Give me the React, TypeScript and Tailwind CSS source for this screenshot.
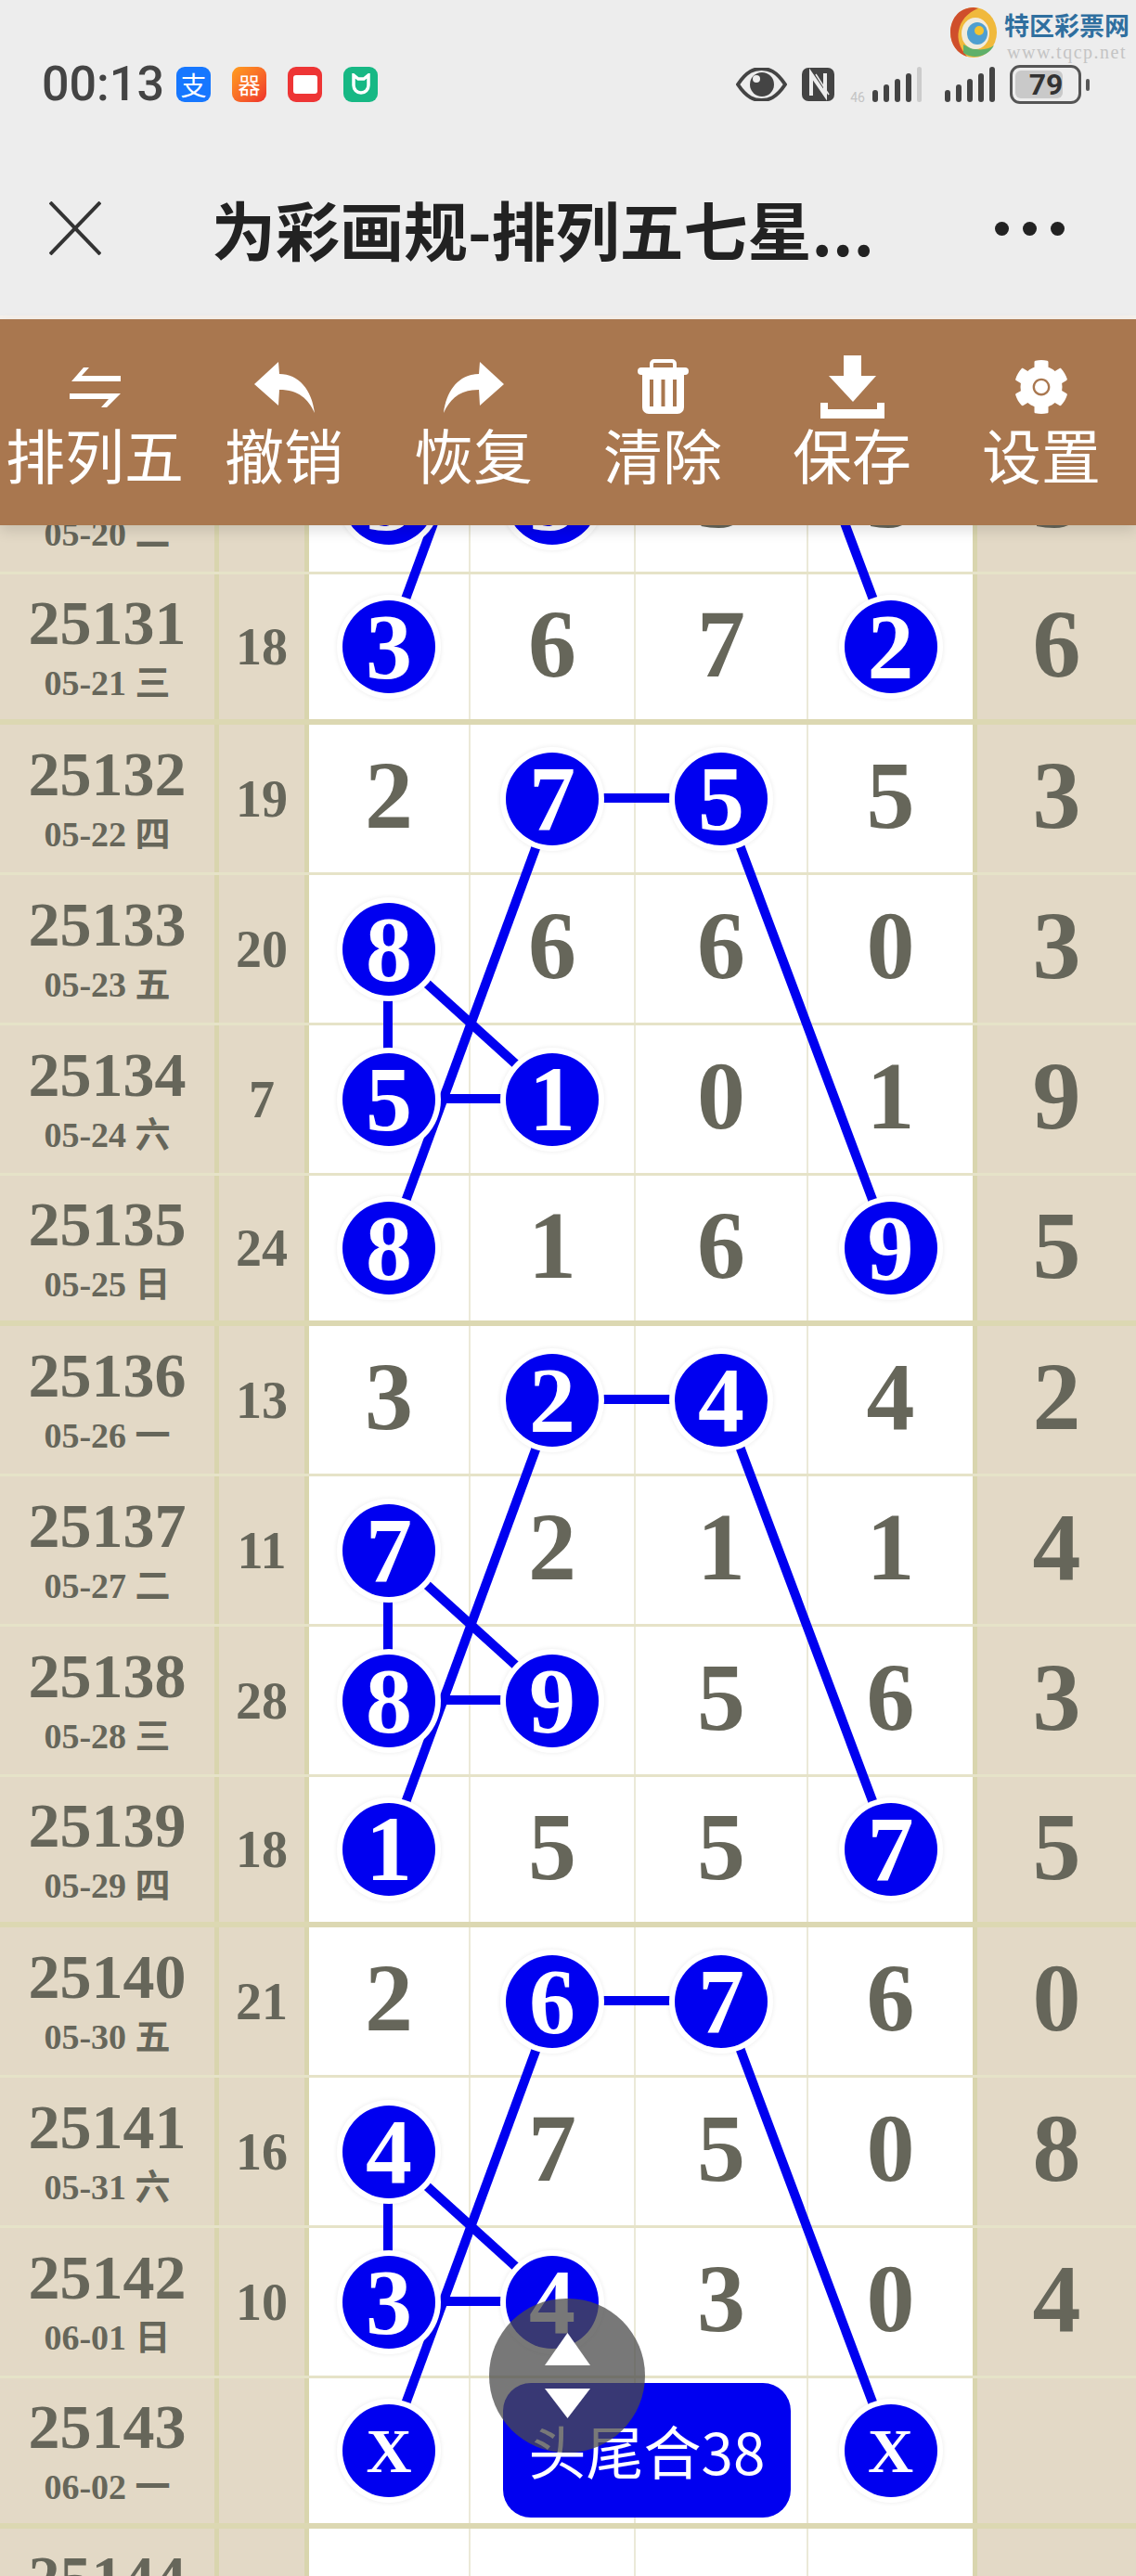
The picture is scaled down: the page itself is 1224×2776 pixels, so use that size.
import { FaCog } from 'react-icons/fa';

const SERIF = "font-['Liberation_Serif','Noto_Sans_CJK_SC',serif]";
const CJK = "font-['Noto_Sans_CJK_SC',sans-serif]";
const BROWN = '#a9774f';

// b = Kugel (blauer Kreis), sonst normale Ziffer
type Cell = { v: string; b?: boolean };
type Row = { no: string; date: string; sum: string; cells: Cell[]; last: string; thick: boolean };

const n = (v: string): Cell => ({ v });
const b = (v: string): Cell => ({ v, b: true });

const rows: Row[] = [
  { no: '25130', date: '05-20 二', sum: '16', cells: [b('3'), b('3'), n('3'), n('3')], last: '3', thick: false },
  { no: '25131', date: '05-21 三', sum: '18', cells: [b('3'), n('6'), n('7'), b('2')], last: '6', thick: true },
  { no: '25132', date: '05-22 四', sum: '19', cells: [n('2'), b('7'), b('5'), n('5')], last: '3', thick: false },
  { no: '25133', date: '05-23 五', sum: '20', cells: [b('8'), n('6'), n('6'), n('0')], last: '3', thick: false },
  { no: '25134', date: '05-24 六', sum: '7', cells: [b('5'), b('1'), n('0'), n('1')], last: '9', thick: false },
  { no: '25135', date: '05-25 日', sum: '24', cells: [b('8'), n('1'), n('6'), b('9')], last: '5', thick: true },
  { no: '25136', date: '05-26 一', sum: '13', cells: [n('3'), b('2'), b('4'), n('4')], last: '2', thick: false },
  { no: '25137', date: '05-27 二', sum: '11', cells: [b('7'), n('2'), n('1'), n('1')], last: '4', thick: false },
  { no: '25138', date: '05-28 三', sum: '28', cells: [b('8'), b('9'), n('5'), n('6')], last: '3', thick: false },
  { no: '25139', date: '05-29 四', sum: '18', cells: [b('1'), n('5'), n('5'), b('7')], last: '5', thick: true },
  { no: '25140', date: '05-30 五', sum: '21', cells: [n('2'), b('6'), b('7'), n('6')], last: '0', thick: false },
  { no: '25141', date: '05-31 六', sum: '16', cells: [b('4'), n('7'), n('5'), n('0')], last: '8', thick: false },
  { no: '25142', date: '06-01 日', sum: '10', cells: [b('3'), b('4'), n('3'), n('0')], last: '4', thick: false },
  { no: '25143', date: '06-02 一', sum: '', cells: [b('X'), n(''), n(''), b('X')], last: '', thick: true },
  { no: '25144', date: '06-03 二', sum: '', cells: [n(''), n(''), n(''), n('')], last: '', thick: false },
];

// Verbindungslinien in Seitenkoordinaten
const X = [418, 597, 778, 960];

function groupLines(y: number) {
  const step = 162;
  return [
    [X[1], y, X[0], y + step * 3],
    [X[1], y, X[2], y],
    [X[2], y, X[3], y + step * 3],
    [X[0], y + step, X[0], y + step * 2],
    [X[0], y + step, X[1], y + step * 2],
    [X[0], y + step * 2, X[1], y + step * 2],
  ];
}

const lines = [
  [X[0], 697, X[1], 211],
  [X[3], 697, X[2], 211],
  ...groupLines(860),
  ...groupLines(1508),
  ...groupLines(2156),
];

// ---------------------------------------------------------------------------
// Icons
// ---------------------------------------------------------------------------

function ExchangeIcon() {
  return (
    <svg width="55" height="43" viewBox="0 0 55 43" fill="white">
      <path d="M2 15 L15 0 H21 L13 9 H55 V15 Z" />
      <path d="M0 28 H55 L40 43 H34 L42 34 H0 Z" />
    </svg>
  );
}

function ReplyIcon({ flip }: { flip?: boolean }) {
  return (
    <svg width="65" height="55" viewBox="0 0 65 55" fill="white" className={flip ? '-scale-x-100' : ''}>
      <path d="M0 24 L26 0 L27 13 C48 13 62 30 65 55 C58 40 48 30 27 30 L26 47 Z" />
    </svg>
  );
}

function TrashIcon() {
  return (
    <svg width="55" height="60" viewBox="0 0 55 60" fill="white">
      <rect x="15" y="2" width="25" height="11" rx="3" fill="none" stroke="white" strokeWidth="4" />
      <rect x="0" y="9" width="55" height="8" rx="4" />
      <path d="M5 15 H50 V52 a7 7 0 0 1 -7 7 H12 a7 7 0 0 1 -7 -7 Z" />
      <rect x="13" y="22" width="4" height="29" fill={BROWN} />
      <rect x="25.5" y="22" width="4" height="29" fill={BROWN} />
      <rect x="38" y="22" width="4" height="29" fill={BROWN} />
    </svg>
  );
}

function DownloadIcon() {
  return (
    <svg width="69" height="68" viewBox="0 0 69 68" fill="white">
      <rect x="25" y="0" width="19" height="23" />
      <polygon points="9,22 60,22 35,50" />
      <path d="M0 51 H8 V58 H61 V51 H69 V68 H0 Z" />
    </svg>
  );
}

function GearIcon() {
  return (
    <div className="relative h-[60px] w-[60px]">
      <FaCog size={60} color="white" />
      <div className="absolute left-[23px] top-[23px] h-[14px] w-[14px] rounded-full bg-white" />
    </div>
  );
}

function EyeIcon() {
  return (
    <svg width="55" height="36" viewBox="0 0 55 36">
      <path d="M2 18 C12 3 20 1 27.5 1 C35 1 43 3 53 18 C43 33 35 35 27.5 35 C20 35 12 33 2 18 Z" fill="none" stroke="#444" strokeWidth="4" />
      <circle cx="28" cy="18" r="13" fill="#444" />
      <circle cx="22" cy="12" r="4" fill="#ededed" />
    </svg>
  );
}

function NfcIcon() {
  return (
    <svg width="37" height="38" viewBox="0 0 37 38" fill="none">
      <rect x="1" y="1" width="35" height="36" rx="7" fill="#444" />
      <path d="M11 31 V8 L26 30 V7" stroke="#ededed" strokeWidth="4" />
      <path d="M16 8 L30 30" stroke="#ededed" strokeWidth="1.5" />
    </svg>
  );
}

function CatIcon() {
  return (
    <svg width="22" height="24" viewBox="0 0 22 24" fill="none" stroke="white" strokeWidth="3.5">
      <path d="M3 2 V13 A8 8 0 0 0 19 13 V2 L14 6 H8 Z" />
    </svg>
  );
}

function Bars({ dim }: { dim?: boolean }) {
  const heights = [13, 19, 25, 31, 38];
  return (
    <div className="flex items-end gap-[6px]">
      {heights.map((h, i) => (
        <div
          key={h}
          style={{ height: h }}
          className={
            dim && i === 4 ? 'w-[5px] rounded-full bg-[#cccccc]' : 'w-[6px] rounded-full bg-[#444444]'
          }
        />
      ))}
    </div>
  );
}

function LogoSwirl() {
  return (
    <svg width="50" height="54" viewBox="0 0 50 54">
      <ellipse cx="25" cy="27" rx="25" ry="27" fill="#f0b93c" />
      <path d="M25 0 C8 0 0 14 0 27 C0 40 8 50 18 53 C10 44 7 34 9 25 C11 14 18 6 30 1 Z" fill="#cf4f2b" />
      <path d="M14 49 C24 56 40 54 47 41 C38 47 26 47 14 40 Z" fill="#5fb06a" />
      <ellipse cx="27" cy="28" rx="15" ry="17" fill="#f1ebdc" />
      <ellipse cx="29" cy="28" rx="11" ry="12" fill="#4f9fd0" />
      <circle cx="31" cy="25" r="5" fill="#f4c430" />
    </svg>
  );
}

// ---------------------------------------------------------------------------
// Tabelle
// ---------------------------------------------------------------------------

function Ball({ v }: { v: string }) {
  return (
    <div
      className={`${SERIF} relative z-[2] flex h-[100px] w-[100px] items-center justify-center rounded-full bg-[#0000f0] text-[100px] font-bold leading-none text-white shadow-[0_0_0_6px_#fff,0_0_4px_7px_rgba(0,0,0,0.06)]`}
    >
      {v === 'X' ? <span className="text-[68px]">X</span> : v}
    </div>
  );
}

function Digit({ cell }: { cell: Cell }) {
  if (cell.b) return <Ball v={cell.v} />;
  return <span className={`${SERIF} pb-[7px] text-[104px] font-bold leading-none text-[#66665a]`}>{cell.v}</span>;
}

function TableRow({ row }: { row: Row }) {
  const thin = 'flex min-h-0 items-center justify-center border-r-2 border-[#ebe9d8] bg-white';
  return (
    <div
      className={
        row.thick
          ? 'grid h-[162px] grid-cols-[236px_97px_174px_178px_186px_177px_176px] grid-rows-1 border-b-[6px] border-[#dcd8b2]'
          : 'grid h-[162px] grid-cols-[236px_97px_174px_178px_186px_177px_176px] grid-rows-1 border-b-[3px] border-[#e6e3c8]'
      }
    >
      <div className={`${SERIF} flex flex-col items-center justify-center border-r-[5px] border-[#d9d5ae] bg-[#e3d9c6] font-bold text-[#66665a]`}>
        <span className="text-[68px] leading-[70px]">{row.no}</span>
        <span className="mt-[7px] text-[38px] leading-[46px]">{row.date}</span>
      </div>
      <div className={`${SERIF} flex items-center justify-center border-r-[5px] border-[#d9d5ae] bg-[#e3d9c6] text-[56px] font-bold leading-none text-[#66665a]`}>
        {row.sum}
      </div>
      <div className={thin}>
        <Digit cell={row.cells[0]} />
      </div>
      <div className={thin}>
        <Digit cell={row.cells[1]} />
      </div>
      <div className={thin}>
        <Digit cell={row.cells[2]} />
      </div>
      <div className="flex items-center justify-center bg-white">
        <Digit cell={row.cells[3]} />
      </div>
      <div className={`${SERIF} flex items-center justify-center border-l-[5px] border-[#d9d5ae] bg-[#e3d9c6] pb-[7px] text-[104px] font-bold leading-none text-[#66665a]`}>
        {row.last}
      </div>
    </div>
  );
}

const tools = [
  { label: '排列五', icon: <ExchangeIcon /> },
  { label: '撤销', icon: <ReplyIcon /> },
  { label: '恢复', icon: <ReplyIcon flip /> },
  { label: '清除', icon: <TrashIcon /> },
  { label: '保存', icon: <DownloadIcon /> },
  { label: '设置', icon: <GearIcon /> },
];

export default function App() {
  return (
    <div className="relative h-[2776px] w-[1224px] overflow-hidden bg-white">
      {/* Statusleiste + Titel */}
      <div className="relative z-20 h-[344px] border-b-4 border-[#f6f1ec] bg-[#ededed]">
        <div className="flex h-[182px] items-center">
          <span className="ml-[45px] w-[145px] font-['Roboto',sans-serif] text-[52px] font-medium text-[#444444]">00:13</span>
          <div className="flex gap-[23px]">
            <div className={`${CJK} flex h-[38px] w-[37px] items-center justify-center rounded-[9px] bg-[#1677ff] text-[28px] leading-none text-white`}>支</div>
            <div className={`${CJK} flex h-[38px] w-[37px] items-center justify-center rounded-[9px] bg-linear-to-br from-[#ff9d1e] to-[#ee2b2b] text-[24px] leading-none text-white`}>器</div>
            <div className="flex h-[38px] w-[37px] items-center justify-center rounded-[9px] bg-[#ee3535]">
              <div className="h-[20px] w-[26px] rounded-[3px] bg-white" />
            </div>
            <div className="flex h-[38px] w-[37px] items-center justify-center rounded-[9px] bg-[#17b884]">
              <CatIcon />
            </div>
          </div>
          <div className="ml-auto mr-[50px] flex items-center">
            <EyeIcon />
            <div className="ml-[15px]">
              <NfcIcon />
            </div>
            <div className="ml-[16px] mr-[8px] self-end font-['Roboto',sans-serif] text-[14px] leading-none text-[#c4c4c4]">46</div>
            <Bars dim />
            <div className="ml-[25px]">
              <Bars />
            </div>
            <div className="ml-[16px] flex h-[42px] w-[77px] items-center rounded-[11px] border-[3px] border-[#555555] p-[3px]">
              <div className="flex h-full w-[79%] items-center justify-end rounded-[6px] bg-[#c9c9c9] font-['Roboto',sans-serif] text-[32px] font-bold leading-none text-[#333333]">79</div>
            </div>
            <div className="ml-[5px] h-[13px] w-[4px] rounded-full bg-[#555555]" />
          </div>
        </div>

        <div className="flex h-[128px] items-center">
          <svg width="56" height="58" viewBox="0 0 56 58" className="ml-[53px]" stroke="#333333" strokeWidth="4">
            <line x1="1" y1="1" x2="55" y2="57" />
            <line x1="55" y1="1" x2="1" y2="57" />
          </svg>
          <span className={`${CJK} ml-[119px] whitespace-nowrap text-[69px] font-bold leading-none text-[#222222]`}>为彩画规-排列五七星...</span>
          <div className="ml-auto mr-[77px] flex gap-[15px]">
            <div className="h-[15px] w-[15px] rounded-full bg-[#222222]" />
            <div className="h-[15px] w-[15px] rounded-full bg-[#222222]" />
            <div className="h-[15px] w-[15px] rounded-full bg-[#222222]" />
          </div>
        </div>

        {/* Wasserzeichen */}
        <div className="absolute left-[1024px] top-[8px] flex gap-[8px]">
          <LogoSwirl />
          <div className="flex flex-col items-center">
            <span className={`${CJK} whitespace-nowrap text-[27px] font-bold leading-[38px] text-[#2f6f9f]`}>特区彩票网</span>
            <span className={`${SERIF} whitespace-nowrap text-[20px] leading-[20px] tracking-[1.5px] text-[#c4c4c4]`}>www.tqcp.net</span>
          </div>
        </div>
      </div>

      {/* Werkzeugleiste */}
      <div className="relative z-20 grid h-[222px] grid-cols-6 bg-[#a9774f] pt-[38px] shadow-[0_6px_14px_rgba(0,0,0,0.12)]">
        {tools.map((t) => (
          <div key={t.label} className="flex flex-col items-center">
            <div className="flex h-[70px] items-center justify-center">{t.icon}</div>
            <span className={`${CJK} mt-[1px] whitespace-nowrap text-[64px] leading-[70px] text-white`}>{t.label}</span>
          </div>
        ))}
      </div>

      {/* Tabelle, läuft unter der Werkzeugleiste durch */}
      <div className="mt-[-109px]">
        {rows.map((r) => (
          <TableRow key={r.no} row={r} />
        ))}
      </div>

      {/* Linien */}
      <svg width="1224" height="2776" className="absolute left-0 top-0 z-[1]">
        {lines.map((l, i) => (
          <line key={i} x1={l[0]} y1={l[1]} x2={l[2]} y2={l[3]} stroke="#0000f0" strokeWidth="10" />
        ))}
      </svg>

      {/* Summen-Badge */}
      <div className={`${CJK} absolute left-[542px] top-[2568px] z-[3] flex h-[145px] w-[310px] items-center justify-center rounded-[30px] bg-[#0000f0] text-[62px] text-white`}>
        头尾合38
      </div>

      {/* Scroll-Button */}
      <div className="absolute left-[527px] top-[2477px] z-[4] flex h-[166px] w-[168px] flex-col items-center justify-center gap-[25px] rounded-full bg-[rgba(75,75,75,0.75)]">
        <svg width="49" height="35" viewBox="0 0 49 35" fill="white">
          <polygon points="24.5,0 49,35 0,35" />
        </svg>
        <svg width="49" height="32" viewBox="0 0 49 32" fill="white">
          <polygon points="0,0 49,0 24.5,32" />
        </svg>
      </div>
    </div>
  );
}
